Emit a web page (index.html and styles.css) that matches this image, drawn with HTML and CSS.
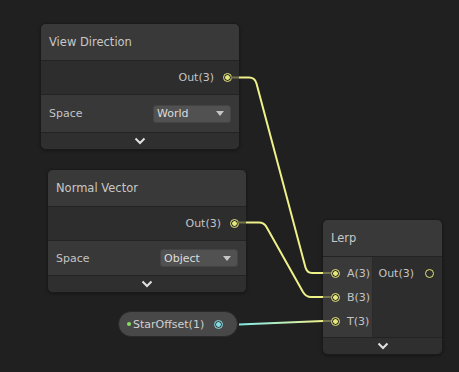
FILE: index.html
```html
<!DOCTYPE html>
<html lang="en">
<head>
  <meta charset="UTF-8" />
  <title>Shader Graph</title>
  <link rel="stylesheet" href="styles.css">
</head>
<body>
  <div class="graph">

    <!-- View Direction node -->
    <div class="node node-view">
      <div class="node-title">View Direction</div>
      <div class="node-ports">
        <div class="out-slot"><span>Out(3)</span><i class="port"></i></div>
      </div>
      <div class="node-props">
        <span>Space</span>
        <div class="dropdown"><span>World</span><i class="caret"></i></div>
      </div>
      <div class="node-collapse">
        <svg width="12" height="8" viewBox="0 0 12 8"><path d="M1.5 1.5 L6 6 L10.5 1.5" /></svg>
      </div>
    </div>

    <!-- Normal Vector node -->
    <div class="node node-normal">
      <div class="node-title">Normal Vector</div>
      <div class="node-ports">
        <div class="out-slot"><span>Out(3)</span><i class="port"></i></div>
      </div>
      <div class="node-props">
        <span>Space</span>
        <div class="dropdown"><span>Object</span><i class="caret"></i></div>
      </div>
      <div class="node-collapse">
        <svg width="12" height="8" viewBox="0 0 12 8"><path d="M1.5 1.5 L6 6 L10.5 1.5" /></svg>
      </div>
    </div>

    <!-- Lerp node -->
    <div class="node node-lerp">
      <div class="node-title">Lerp</div>
      <div class="lerp-body">
        <div class="inputs">
          <div class="in-slot"><i class="port"></i><span>A(3)</span></div>
          <div class="in-slot"><i class="port"></i><span>B(3)</span></div>
          <div class="in-slot"><i class="port"></i><span>T(3)</span></div>
        </div>
        <div class="outputs">
          <div class="out-slot"><span>Out(3)</span><i class="port empty"></i></div>
        </div>
      </div>
      <div class="node-collapse">
        <svg width="12" height="8" viewBox="0 0 12 8"><path d="M1.5 1.5 L6 6 L10.5 1.5" /></svg>
      </div>
    </div>

    <!-- Property node -->
    <div class="prop-pill">
      <i class="dot"></i><span>StarOffset(1)</span><i class="port cyan"></i>
    </div>

    <!-- wires -->
    <svg class="wires" width="459" height="372" viewBox="0 0 459 372">
      <defs>
        <linearGradient id="tWire" x1="239" y1="0" x2="323" y2="0" gradientUnits="userSpaceOnUse">
          <stop offset="0" stop-color="#80e8e4"/>
          <stop offset="0.35" stop-color="#a6eccc"/>
          <stop offset="1" stop-color="#f0f088"/>
        </linearGradient>
      </defs>
      <g class="stub">
        <path d="M231 77.5 H239" />
        <path d="M237 222.5 H246" />
        <path d="M323 273 H331" />
        <path d="M323 297 H331" />
        <path d="M323 321 H331" />
      </g>
      <path class="wire" d="M239 77.5 H249 Q255 77.5 256.5 83.5 L305.5 267.5 Q307 273 312 273 H323" />
      <path class="wire" d="M246 222.5 H259 Q264 222.5 266.5 227 L303 292 Q306 297 311 297 H323" />
      <path class="wire t-wire" d="M239 324.5 L323 321" />
    </svg>
  </div>
</body>
</html>
```

FILE: styles.css
```css
body {
  margin: 0;
  background: #202020;
  font-family: "DejaVu Sans", sans-serif;
  color: #c4c4c4;
  overflow: hidden;
}
.graph {
  position: relative;
  width: 459px;
  height: 372px;
}
/* Nodes */
.node {
  position: absolute;
  box-sizing: border-box;
  background: #2e2e2e;
  border: 1px solid #1a1a1a;
  border-radius: 6px;
  overflow: hidden;
  box-shadow: 0 1px 3px rgba(0,0,0,0.35);
}
.node-view   { left: 40px;  top: 23px;  width: 200px; }
.node-normal { left: 47px;  top: 169px; width: 200px; }
.node-lerp   { left: 322px; top: 219px; width: 121px; }

.node-title {
  height: 36px;
  display: flex;
  align-items: center;
  padding-left: 8px;
  background: #393939;
  border-bottom: 1px solid #232323;
  font-size: 11.5px;
  color: #c8c8c8;
}
.node-ports {
  height: 33px;
  display: flex;
  align-items: center;
  justify-content: flex-end;
  padding-right: 7px;
  background: #2d2d2d;
  border-bottom: 1px solid #232323;
}
.out-slot {
  display: flex;
  align-items: center;
  gap: 9px;
  font-size: 11px;
}
.node-props {
  height: 37px;
  display: flex;
  align-items: center;
  justify-content: space-between;
  padding: 0 8px;
  background: #383838;
  border-bottom: 1px solid #232323;
  font-size: 11px;
}
.node-normal .node-props { height: 34px; }
.dropdown {
  width: 78px;
  height: 18px;
  box-sizing: border-box;
  display: flex;
  align-items: center;
  justify-content: space-between;
  padding: 0 6px 0 3px;
  background: #515151;
  border: 1px solid #444;
  border-radius: 3px;
  color: #dcdcdc;
}
.caret {
  width: 0; height: 0;
  border-left: 4px solid transparent;
  border-right: 4px solid transparent;
  border-top: 5px solid #c6c6c6;
}
.node-collapse {
  height: 16px;
  display: flex;
  align-items: center;
  justify-content: center;
  background: #2f2f2f;
}
.node-collapse path {
  fill: none;
  stroke: #e0e0e0;
  stroke-width: 2;
}
/* Ports */
.port {
  display: block;
  width: 9px; height: 9px;
  box-sizing: border-box;
  border: 1px solid #e4e67c;
  border-radius: 50%;
  background: radial-gradient(circle, #e4e67c 0, #e4e67c 2px, #2e2e2a 2.6px);
}
.port.empty { background: #2e2e2e; }
.port.cyan {
  border-color: #84dce2;
  background: radial-gradient(circle, #84dce2 0, #84dce2 2px, #3c4748 2.6px);
}
/* Lerp body */
.lerp-body {
  display: flex;
  height: 80px;
  border-bottom: 1px solid #232323;
}
.inputs {
  width: 54px;
  padding: 4px 0 0 8px;
  box-sizing: border-box;
  background: #393939;
  border-right: 1px solid #2a2a2a;
}
.in-slot {
  height: 24px;
  display: flex;
  align-items: center;
  gap: 7px;
  font-size: 11px;
}
.outputs {
  flex: 1;
  padding: 4px 8px 0 5px;
  background: #2d2d2d;
}
.outputs .out-slot { height: 24px; gap: 11px; }
/* Property pill */
.prop-pill {
  position: absolute;
  left: 118px; top: 311px;
  width: 120px; height: 26px;
  box-sizing: border-box;
  display: flex;
  align-items: center;
  padding-left: 8px;
  background: #484848;
  border: 1px solid #2a2a2a;
  border-radius: 13px;
  font-size: 11px;
  color: #d0d0d0;
}
.prop-pill .dot {
  width: 4px; height: 4px;
  border-radius: 50%;
  background: #84e058;
  margin-right: 2px;
}
.prop-pill .port { margin-left: 10px; }
/* Wires overlay */
.wires {
  position: absolute;
  top: 0; left: 0;
  pointer-events: none;
}
.wires path { fill: none; stroke-width: 2; }
.wire { stroke: #eef08a; }
.wires .t-wire { stroke: url(#tWire); }
.stub path { stroke: #74744c; }
```
